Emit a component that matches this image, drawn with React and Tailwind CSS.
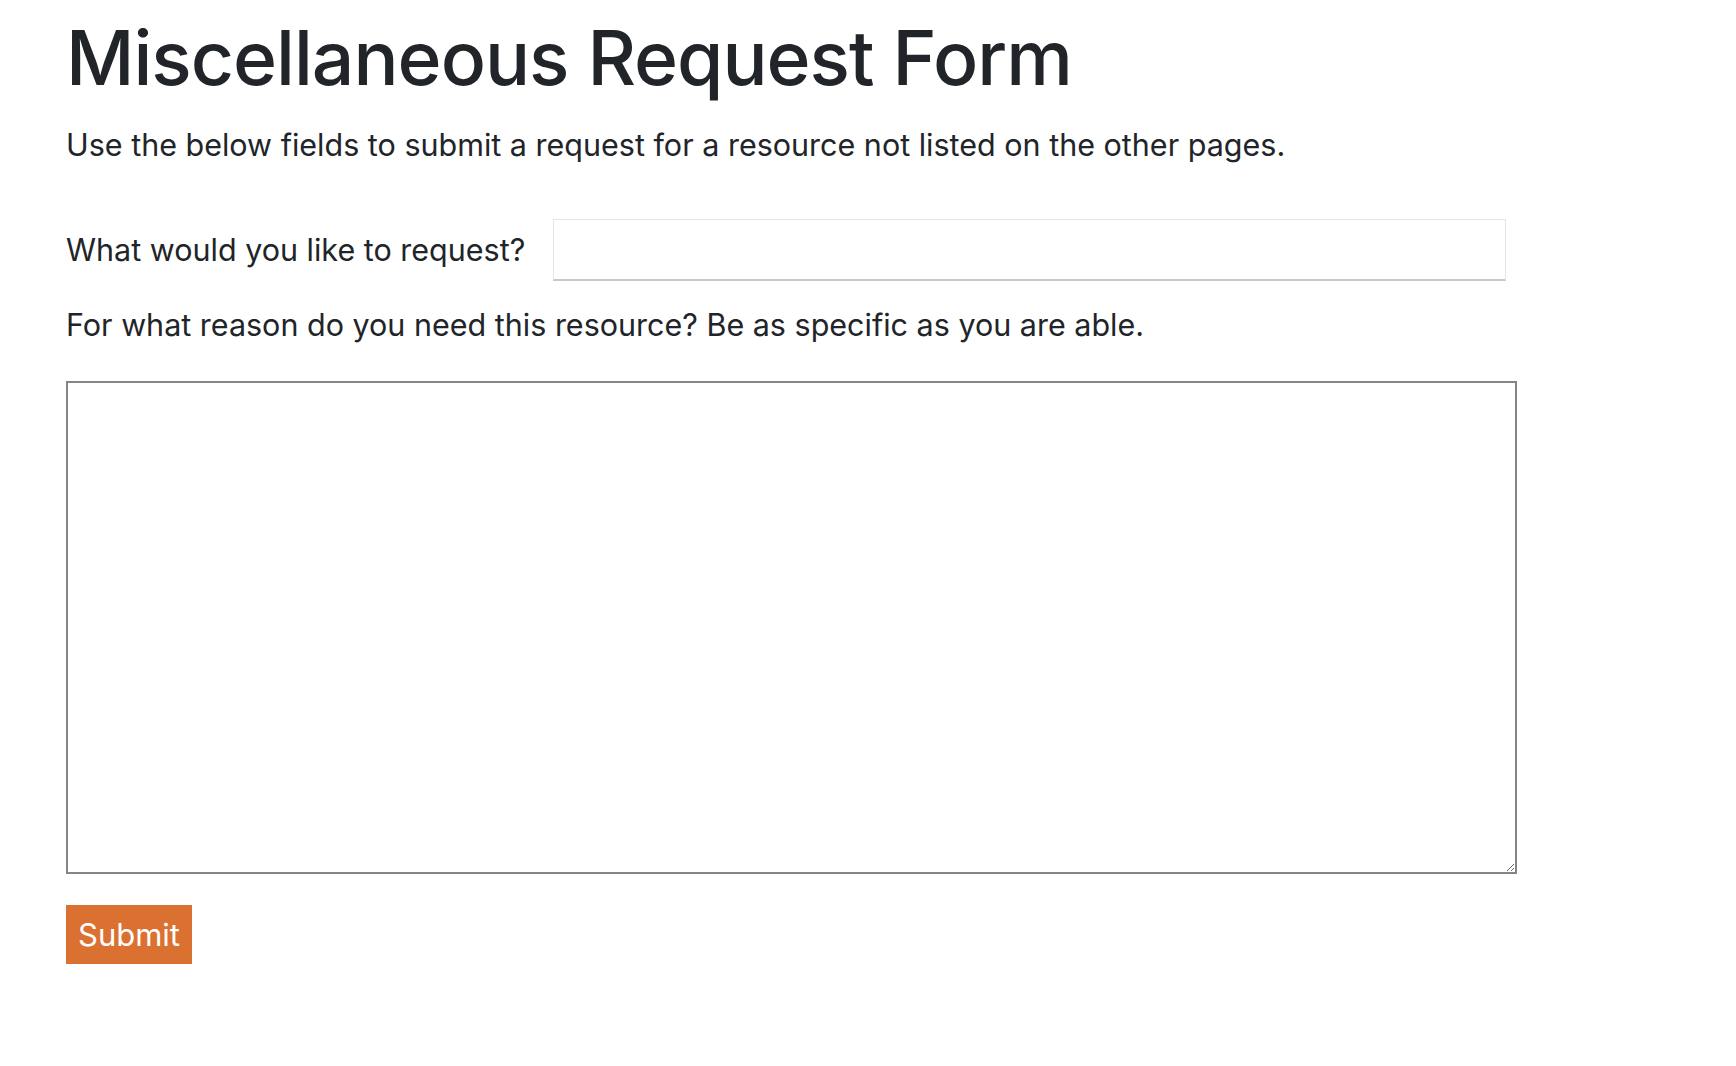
import React, { useState } from "react";

const App = () => {
  const [item, setItem] = useState("");
  const [reason, setReason] = useState("");

  return (
    <div
      className="min-h-screen bg-white pl-[66px] pt-[13px] text-[#212529]"
      style={{ fontFamily: 'Inter, "Liberation Sans", Arial, sans-serif' }}
    >
      {/* Title */}
      <h1 className="text-[75px] leading-[1.2] font-medium tracking-[-1px]">
        Miscellaneous Request Form
      </h1>
      <p className="mt-[19px] text-[30.5px] leading-[1.5]">
        Use the below fields to submit a request for a resource not listed on the other pages.
      </p>

      <form className="mt-[51px]" onSubmit={(e) => e.preventDefault()}>
        {/* Request input */}
        <div className="flex items-center">
          <label className="text-[30.5px] leading-[1.5] mr-[28px]">
            What would you like to request?
          </label>
          <input
            type="text"
            value={item}
            onChange={(e) => setItem(e.target.value)}
            className="w-[953px] h-[62px] border border-[#e6e6e6] border-b-2 border-b-[#c8c8c8] px-3 text-[24px] outline-none"
          />
        </div>

        {/* Reason */}
        <label className="block mt-[21px] text-[30.5px] leading-[1.5]">
          For what reason do you need this resource? Be as specific as you are able.
        </label>
        <textarea
          value={reason}
          onChange={(e) => setReason(e.target.value)}
          className="block mt-[33px] w-[1451px] h-[493px] border-2 border-[#858585] p-2 text-[20px] outline-none"
        />

        <button
          type="submit"
          className="mt-[31px] h-[59px] px-[12px] bg-[#db7131] text-white text-[31px] leading-none"
        >
          Submit
        </button>
      </form>
    </div>
  );
};

export default App;
